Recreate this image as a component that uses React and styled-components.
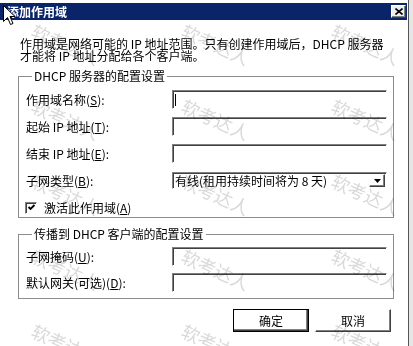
import React from "react";
import styled, { createGlobalStyle } from "styled-components";

const GlobalStyle = createGlobalStyle`
  html, body {
    margin: 0;
    padding: 0;
    background: #fff;
  }
  body {
    font-family: "Noto Sans CJK SC", "Noto Sans", sans-serif;
    font-size: 12px;
    color: #000;
  }
`;

const marks = Array.from({ length: 15 });

const App = () => {
  return (
    <Page>
      <GlobalStyle />
      <Dialog>
        <TitleBar>
          <span>添加作用域</span>
          <CloseButton>
            <svg width="8" height="7" viewBox="0 0 8 7">
              <path d="M0.5 0.5 L7.5 6.5 M7.5 0.5 L0.5 6.5" stroke="#000" strokeWidth="1.6" />
            </svg>
          </CloseButton>
        </TitleBar>

        <Body>
          <Intro>
            作用域是网络可能的 IP 地址范围。只有创建作用域后，DHCP 服务器
            <br />
            才能将 IP 地址分配给各个客户端。
          </Intro>

          <Group $top={8}>
            <Legend>DHCP 服务器的配置设置</Legend>
            <Rows $gap={8} $top={8} $bottom={0}>
              <Label>
                作用域名称(<u>S</u>):
              </Label>
              <Field>
                <Caret />
              </Field>
              <Label>
                起始 IP 地址(<u>T</u>):
              </Label>
              <Field />
              <Label>
                结束 IP 地址(<u>E</u>):
              </Label>
              <Field />
              <Label>
                子网类型(<u>B</u>):
              </Label>
              <Select>
                <span>有线(租用持续时间将为 8 天)</span>
                <DropButton>
                  <svg width="7" height="4" viewBox="0 0 7 4">
                    <path d="M0 0 H7 L3.5 4 Z" fill="#000" />
                  </svg>
                </DropButton>
              </Select>
              <CheckRow>
                <CheckBox>
                  <svg width="9" height="9" viewBox="0 0 9 9">
                    <path d="M1.5 4 L3.5 6 L7.5 2" stroke="#000" strokeWidth="1.8" fill="none" />
                  </svg>
                </CheckBox>
                <span>
                  激活此作用域(<u>A</u>)
                </span>
              </CheckRow>
            </Rows>
          </Group>

          <Group $top={10}>
            <Legend>传播到 DHCP 客户端的配置设置</Legend>
            <Rows $gap={7} $top={7} $bottom={6}>
              <Label>
                子网掩码(<u>U</u>):
              </Label>
              <Field />
              <Label>
                默认网关(可选)(<u>D</u>):
              </Label>
              <Field />
            </Rows>
          </Group>

          <ButtonRow>
            <Button $default>确定</Button>
            <Button>取消</Button>
          </ButtonRow>
        </Body>
      </Dialog>
      <Edge />

      <Watermarks>
        {marks.map((_, i) => (
          <Mark key={i}>软考达人</Mark>
        ))}
      </Watermarks>

      <Pointer width="13" height="21" viewBox="0 0 13 21">
        <path
          d="M0.5 0.5 L0.5 16.5 L4.5 12.5 L7.5 19.5 L10 18.5 L7 11.5 L12 11.5 Z"
          fill="#fff"
          stroke="#000"
          strokeWidth="1"
        />
      </Pointer>
    </Page>
  );
};

export default App;

const Page = styled.div`
  position: relative;
  display: flex;
  width: 413px;
  height: 346px;
  overflow: hidden;
  background: #fff;
`;

const Dialog = styled.div`
  flex: none;
  width: 408px;
  display: flex;
  flex-direction: column;
  background: #fff;
`;

const Edge = styled.div`
  flex: 1;
  border-left: 1px solid #555;
  background: #e6e6e6;
`;

const TitleBar = styled.div`
  box-sizing: border-box;
  margin-top: 3px;
  width: 407px;
  height: 17px;
  padding: 0 1px 0 7px;
  display: flex;
  align-items: center;
  justify-content: space-between;
  background: #0a246a;
  color: #fff;
  font-weight: bold;
  font-size: 12px;
  line-height: 12px;
`;

const CloseButton = styled.div`
  box-sizing: border-box;
  width: 15px;
  height: 13px;
  display: flex;
  align-items: center;
  justify-content: center;
  background: #eeeeee;
  border: 1px solid;
  border-color: #fff #404040 #404040 #fff;
  box-shadow: inset -1px -1px #808080;
`;

const Body = styled.div`
  padding-left: 18px;
`;

const Intro = styled.p`
  margin: 18px 0 0 2px;
  line-height: 12px;
  white-space: nowrap;
`;

const Group = styled.fieldset`
  box-sizing: border-box;
  width: 376px;
  margin: ${(p) => p.$top}px 0 0;
  padding: 0 6px 0 7px;
  border: 1px solid #8c8c8c;
  min-width: 0;
`;

const Legend = styled.legend`
  margin-left: 6px;
  padding: 0 2px;
  font-size: 12px;
  line-height: 12px;
  white-space: nowrap;
`;

const Rows = styled.div`
  display: grid;
  grid-template-columns: 146px 215px;
  grid-auto-rows: 19px;
  row-gap: ${(p) => p.$gap}px;
  align-items: center;
  padding: ${(p) => p.$top}px 0 ${(p) => p.$bottom}px;
`;

const Label = styled.span`
  white-space: nowrap;
  line-height: 12px;
`;

const Field = styled.div`
  box-sizing: border-box;
  height: 19px;
  display: flex;
  align-items: center;
  padding-left: 2px;
  background: #fff;
  border: 1px solid;
  border-color: #808080 #fff #fff #808080;
  box-shadow: inset 1px 1px #404040;
`;

const Caret = styled.span`
  display: block;
  width: 1px;
  height: 12px;
  background: #000;
`;

const Select = styled.div`
  box-sizing: border-box;
  height: 17px;
  display: flex;
  align-items: center;
  justify-content: space-between;
  padding-left: 2px;
  background: #fff;
  border: 1px solid;
  border-color: #808080 #fff #fff #808080;
  box-shadow: inset 1px 1px #404040;
  white-space: nowrap;
  line-height: 12px;
`;

const DropButton = styled.div`
  box-sizing: border-box;
  width: 16px;
  height: 13px;
  margin-right: 1px;
  display: flex;
  align-items: center;
  justify-content: center;
  background: #fff;
  border: 1px solid;
  border-color: #fff #404040 #404040 #fff;
  box-shadow: inset -1px -1px #808080;
`;

const CheckRow = styled.div`
  grid-column: 1 / -1;
  display: flex;
  align-items: center;
  gap: 7px;
  margin-left: -1px;
  line-height: 12px;
`;

const CheckBox = styled.div`
  box-sizing: border-box;
  width: 12px;
  height: 12px;
  display: flex;
  align-items: center;
  justify-content: center;
  background: #fff;
  border: 1px solid;
  border-color: #808080 #fff #fff #808080;
  box-shadow: inset 1px 1px #404040;
`;

const ButtonRow = styled.div`
  width: 373px;
  margin-top: 10px;
  display: flex;
  justify-content: flex-end;
  gap: 6px;
`;

const Button = styled.div`
  box-sizing: border-box;
  width: 76px;
  height: 23px;
  display: flex;
  align-items: center;
  justify-content: center;
  background: #fff;
  font-size: 12px;
  border: 1px solid;
  border-color: ${(p) => (p.$default ? "#000" : "#fff #404040 #404040 #fff")};
  box-shadow: ${(p) =>
    p.$default
      ? "inset -1px -1px #404040, inset -2px -2px #808080"
      : "inset -1px -1px #808080"};
`;

const Watermarks = styled.div`
  position: absolute;
  inset: 0;
  display: grid;
  grid-template-columns: repeat(3, 150px);
  grid-auto-rows: 75px;
  padding: 20px 0 0 37px;
  pointer-events: none;
  mix-blend-mode: multiply;
`;

const Mark = styled.span`
  display: block;
  width: max-content;
  height: 20px;
  font-size: 18px;
  line-height: 20px;
  color: #d9d9d9;
  transform: rotate(24deg);
  transform-origin: 0 0;
`;

const Pointer = styled.svg`
  position: absolute;
  left: 3px;
  top: 5px;
`;
